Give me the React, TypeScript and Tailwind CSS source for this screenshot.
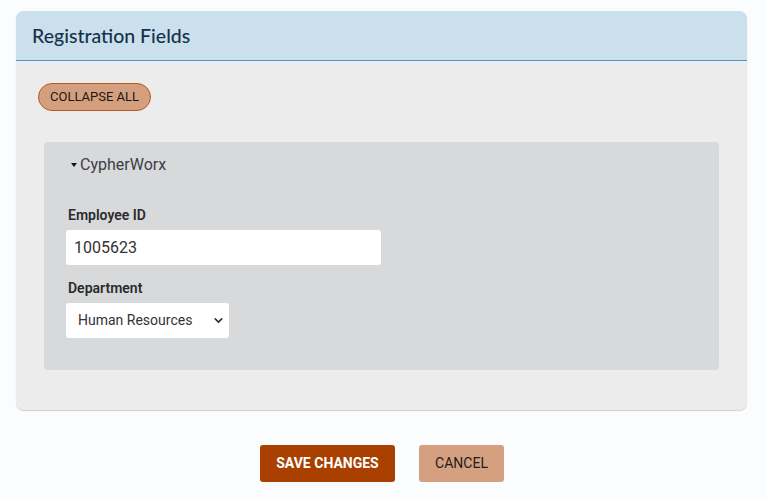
import { ChevronDown } from "lucide-react";

export default function App() {
  return (
    <div className="min-h-screen bg-[#fbfcfe] pt-[11px] font-['Roboto',sans-serif]">
      <div className="mx-[16px] w-[731px] overflow-hidden rounded-[8px] bg-[#ececed] shadow-[0_1px_1px_rgba(0,0,0,0.18)]">
        <div className="flex h-[50px] items-center border-b border-[#4a98c9] bg-[#cae0ed] px-[16px]">
          <h2 className="font-['Lato',sans-serif] text-[19.5px] font-medium text-[#17304c]">
            Registration Fields
          </h2>
        </div>
        <div className="px-[22px] pb-[40px] pt-[22px]">
          <button
            type="button"
            className="h-[28px] rounded-full border border-[#b65a22] bg-[#d49f7f] px-[11px] text-[13px] font-normal text-[#1f1612]"
          >
            COLLAPSE ALL
          </button>
          <div className="ml-[6px] mt-[31px] h-[228px] w-[675px] rounded-[3px] bg-[#d8d9db] px-[22px] pt-[11px]">
            <div className="ml-[5px] flex items-center text-[16px] text-[#3b4046]">
              <span className="mr-[3px] h-0 w-0 border-x-[3.5px] border-t-[4px] border-x-transparent border-t-[#111]" />
              CypherWorx
            </div>
            <div className="ml-[2px] mt-[28px] text-[14px] font-semibold text-[#2b2b2b]">Employee ID</div>
            <input
              defaultValue="1005623"
              className="mt-[4px] h-[35px] w-[315px] rounded-[3px] bg-white px-[8px] text-[16px] text-[#333] outline-none"
            />
            <div className="ml-[2px] mt-[13px] text-[14px] font-semibold text-[#2b2b2b]">Department</div>
            <div className="mt-[4px] flex h-[35px] w-[163px] items-center justify-between rounded-[3px] bg-white pl-[12px] pr-[4px] text-[14px] text-[#333]">
              <span>Human Resources</span>
              <ChevronDown size={13} strokeWidth={3} className="text-[#333]" />
            </div>
          </div>
        </div>
      </div>
      <div className="mt-[35px] flex justify-center gap-[24px] pr-[2px]">
        <button
          type="button"
          className="h-[37px] w-[135px] rounded-[3px] bg-[#a94000] text-[14px] font-bold text-white"
        >
          SAVE CHANGES
        </button>
        <button
          type="button"
          className="h-[37px] w-[85px] rounded-[3px] bg-[#d4a07f] text-[14px] font-normal text-[#1f1c1a]"
        >
          CANCEL
        </button>
      </div>
    </div>
  );
}
